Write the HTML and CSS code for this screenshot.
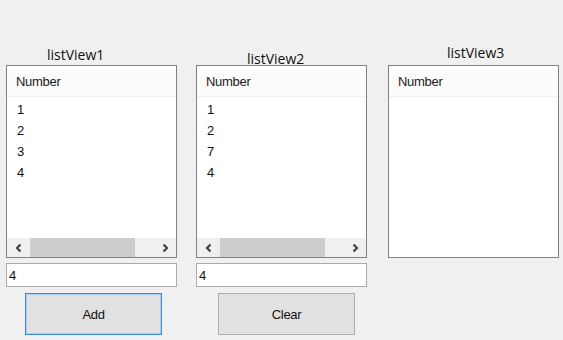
FILE: index.html
```html
<!DOCTYPE html>
<html>
<head>
	<title>Form1</title>
	<meta charset="utf-8">
	<link rel="stylesheet" href="styles.css">
</head>
<body>
	<div class="form">
		<div class="col col-1">
			<div class="caption caption-1">listView1</div>
			<div class="listview">
				<div class="lv-header">Number</div>
				<ul class="lv-items">
					<li>1</li>
					<li>2</li>
					<li>3</li>
					<li>4</li>
				</ul>
				<div class="hscroll">
					<span class="arrow"><svg width="10" height="10" viewBox="0 0 10 10"><polyline points="6.5,1.5 3,5 6.5,8.5" fill="none" stroke="#444" stroke-width="2.2"/></svg></span>
					<span class="track"><span class="thumb thumb-1"></span></span>
					<span class="arrow"><svg width="10" height="10" viewBox="0 0 10 10"><polyline points="3.5,1.5 7,5 3.5,8.5" fill="none" stroke="#444" stroke-width="2.2"/></svg></span>
				</div>
			</div>
			<input class="textbox" type="text" value="4">
			<button class="btn btn-focus btn-1">Add</button>
		</div>

		<div class="col col-2">
			<div class="caption caption-2">listView2</div>
			<div class="listview">
				<div class="lv-header">Number</div>
				<ul class="lv-items">
					<li>1</li>
					<li>2</li>
					<li>7</li>
					<li>4</li>
				</ul>
				<div class="hscroll">
					<span class="arrow"><svg width="10" height="10" viewBox="0 0 10 10"><polyline points="6.5,1.5 3,5 6.5,8.5" fill="none" stroke="#444" stroke-width="2.2"/></svg></span>
					<span class="track"><span class="thumb thumb-2"></span></span>
					<span class="arrow"><svg width="10" height="10" viewBox="0 0 10 10"><polyline points="3.5,1.5 7,5 3.5,8.5" fill="none" stroke="#444" stroke-width="2.2"/></svg></span>
				</div>
			</div>
			<input class="textbox" type="text" value="4">
			<button class="btn btn-2">Clear</button>
		</div>

		<div class="col col-3">
			<div class="caption caption-3">listView3</div>
			<div class="listview">
				<div class="lv-header">Number</div>
				<ul class="lv-items"></ul>
			</div>
		</div>
	</div>
</body>
</html>
```

FILE: styles.css
```css
body{
	margin: 0;
	background: #f0f0f0;
	font-family: "Liberation Sans", Arial, sans-serif;
	font-size: 13px;
	color: #111;
}
.form{
	display: flex;
	align-items: flex-start;
	padding: 45px 0 0 6px;
}
.col{
	width: 171px;
	display: flex;
	flex-direction: column;
}
.col-2{
	margin-left: 19px;
}
.col-3{
	margin-left: 21px;
}
.caption{
	height: 20px;
	line-height: 20px;
	font-family: "Open Sans", "Noto Sans", sans-serif;
	font-size: 14px;
	color: #111;
	white-space: nowrap;
}
.caption-1{
	margin-left: 41px;
}
.caption-2{
	margin-left: 51px;
	line-height: 28px;
}
.caption-3{
	margin-left: 59px;
	line-height: 16px;
}
.listview{
	height: 191px;
	border: 1px solid #828282;
	background: #fff;
	display: flex;
	flex-direction: column;
}
.lv-header{
	height: 30px;
	line-height: 32px;
	padding-left: 9px;
	background: #fcfcfc;
	border-bottom: 1px solid #efefef;
	color: #1a1a1a;
	letter-spacing: -0.3px;
}
.lv-items{
	flex: 1;
	margin: 0;
	padding: 2px 0 0 10px;
	list-style-type: none;
}
.lv-items li{
	height: 21px;
	line-height: 21px;
}
.hscroll{
	height: 19px;
	display: flex;
	align-items: center;
	background: #f0f0f0;
}
.arrow{
	width: 23px;
	height: 19px;
	display: flex;
	align-items: center;
	justify-content: center;
}
.track{
	flex: 1;
	height: 19px;
	display: flex;
}
.thumb{
	height: 19px;
	background: #cdcdcd;
}
.thumb-1,
.thumb-2{
	width: 105px;
}
.textbox{
	margin: 5px 0 0 0;
	height: 24px;
	box-sizing: border-box;
	border: 1px solid #ababab;
	background: #fff;
	padding: 0 2px;
	font-family: "Liberation Sans", Arial, sans-serif;
	font-size: 13px;
	color: #111;
	outline: none;
}
.btn{
	margin-top: 6px;
	width: 137px;
	height: 42px;
	border: 1px solid #adadad;
	background: #e1e1e1;
	font-family: "Liberation Sans", Arial, sans-serif;
	font-size: 13px;
	letter-spacing: -0.3px;
	color: #111;
	padding: 0;
}
.btn-1{
	margin-left: 19px;
}
.btn-2{
	margin-left: 22px;
}
.btn-focus{
	border-color: #3c8be0;
	box-shadow: inset 0 0 0 1px #a9cdf2;
}
```
